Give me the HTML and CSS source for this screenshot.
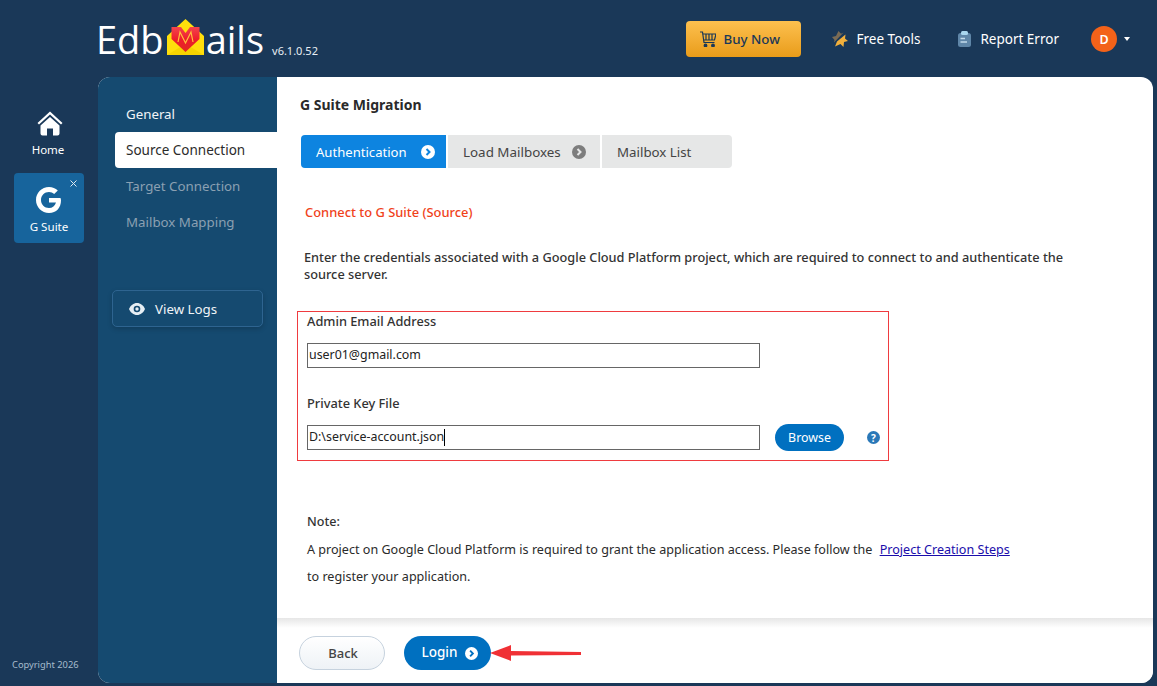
FILE: index.html
```html
<!DOCTYPE html>
<html lang="en">
<head>
<meta charset="utf-8">
<title>EdbMails</title>
<link rel="stylesheet" href="styles.css">
</head>
<body>
<div class="app">
  <header class="topbar">
    <div class="logo">
      <span class="logo-word">Edb</span>
      <svg class="logo-mark" width="37" height="36" viewBox="0 0 37 36">
        <defs>
          <linearGradient id="redfill" x1="0" y1="0" x2="0" y2="1">
            <stop offset="0" stop-color="#f4444c"/>
            <stop offset="0.5" stop-color="#ee1c2c"/>
            <stop offset="1" stop-color="#e02a20"/>
          </linearGradient>
        </defs>
        <path d="M0 17 L18.500 0 L37 17 V36 H0 Z" fill="#ffdf0c"/>
        <path d="M0 36 L18.500 25 L37 36 Z" fill="#f6d400"/>
        <path d="M4.500 8 H14 L18.500 14 L23 8 H32.500 V20 L18.500 33 L4.500 20 Z" fill="url(#redfill)"/>
        <path d="M11 23 L13 13 L18.500 24 L24 13 L26 23" fill="none" stroke="#ffc23a" stroke-width="1.200"/>
      </svg>
      <span class="logo-word">ails</span>
      <span class="version">v6.1.0.52</span>
    </div>
    <nav class="top-actions">
      <button class="buy">
        <svg width="16" height="16" viewBox="0 0 16 16" fill="none" stroke="#1a3858" stroke-width="1.200">
          <path d="M0 1 H2.500 L4 11.500 H14.500"/>
          <path d="M2.800 3 H16 L14.500 9 H3.600"/>
          <path d="M6 3 V9 M9 3 V9 M12 3 V9"/>
          <circle cx="5.500" cy="14.500" r="1.300" fill="#1a3858"/>
          <circle cx="13" cy="14.500" r="1.300" fill="#1a3858"/>
        </svg>
        Buy Now
      </button>
      <a class="top-link free-tools">
        <svg width="16" height="16" viewBox="0 0 16 16">
          <path d="M6.500 0 L9 2.800 L11.500 1.500 L2 11.500 L2.500 9 L0 6 L4 5 Z" fill="#7a6b55"/>
          <path d="M13.500 3.500 L13 7.500 L16 10 L12 11 L11.500 16 L8.500 13 L3 15.500 L5 10.500 Z" fill="#f2b03c"/>
        </svg>
        Free Tools
      </a>
      <a class="top-link report">
        <svg width="13" height="16" viewBox="0 0 13 16">
          <rect x="0" y="2" width="13" height="14" rx="2.500" fill="#5f86a8"/>
          <rect x="3" y="0" width="7" height="4" rx="1.500" fill="#a9d6ee"/>
          <path d="M2.500 7.500 H7 M2.500 11 H9" stroke="#c4dcec" stroke-width="1.300"/>
        </svg>
        Report Error
      </a>
      <div class="avatar">D</div>
      <span class="caret"></span>
    </nav>
  </header>

  <div class="body-row">
    <aside class="rail">
      <a class="rail-home">
        <svg width="26" height="25" viewBox="0 0 26 25" fill="#fff">
          <path d="M13 0.500 L25.500 12 L24 13.500 L13 3.500 L2 13.500 L0.500 12 Z"/>
          <path d="M13 6 L22.500 14.500 V22.500 Q22.500 24.500 20.500 24.500 H16 V17.500 H10 V24.500 H5.500 Q3.500 24.500 3.500 22.500 V14.500 Z"/>
        </svg>
        <span>Home</span>
      </a>
      <div class="rail-tab">
        <svg class="tab-close" width="7" height="7" viewBox="0 0 7 7"><path d="M0.500 0.500 L6.500 6.500 M6.500 0.500 L0.500 6.500" stroke="#dfe9f1" stroke-width="1"/></svg>
        <svg width="26" height="26" viewBox="0 0 26 26">
          <path d="M24.500 11 H13 V15.500 H20 C19 19 16.500 21 13 21 C8.500 21 5 17.500 5 13 C5 8.500 8.500 5 13 5 C15 5 16.800 5.700 18.200 7 L21.800 3.500 C19.500 1.400 16.400 0 13 0 C5.800 0 0 5.800 0 13 C0 20.200 5.800 26 13 26 C20.500 26 25 20.700 25 13.500 C25 12.600 24.800 11.800 24.500 11 Z" fill="#fff"/>
        </svg>
        <span>G Suite</span>
      </div>
      <small class="copyright">Copyright 2026</small>
    </aside>

    <div class="panel">
      <aside class="subnav">
        <ul class="steps">
          <li>General</li>
          <li class="current">Source Connection</li>
          <li class="muted">Target Connection</li>
          <li class="muted">Mailbox Mapping</li>
        </ul>
        <button class="logs">
          <svg width="16" height="12" viewBox="0 0 16 12">
            <path d="M8 0 C4.500 0 1.500 2.400 0 6 C1.500 9.600 4.500 12 8 12 C11.500 12 14.500 9.600 16 6 C14.500 2.400 11.500 0 8 0 Z" fill="#e6eef4"/>
            <circle cx="8" cy="6" r="3.300" fill="#154a70"/>
            <circle cx="8" cy="6" r="1.700" fill="#e6eef4"/>
          </svg>
          View Logs
        </button>
      </aside>

      <main class="content">
        <div class="scroll">
          <h1>G Suite Migration</h1>
          <div class="wizard">
            <div class="wiz active">Authentication
              <svg class="chev" width="14" height="14" viewBox="0 0 14 14"><circle cx="7" cy="7" r="7" fill="#fff"/><path d="M5.500 4 L8.500 7 L5.500 10" fill="none" stroke="#0d84e0" stroke-width="2"/></svg>
            </div>
            <div class="wiz middle">Load Mailboxes
              <svg class="chev" width="14" height="14" viewBox="0 0 14 14"><circle cx="7" cy="7" r="7" fill="#7d7d7d"/><path d="M5.500 4 L8.500 7 L5.500 10" fill="none" stroke="#e6e7e7" stroke-width="2"/></svg>
            </div>
            <div class="wiz last">Mailbox List</div>
          </div>
          <h2>Connect to G Suite (Source)</h2>
          <p class="intro">Enter the credentials associated with a Google Cloud Platform project, which are required to connect to and authenticate the source server.</p>

          <form class="creds">
            <label class="field-label">Admin Email Address</label>
            <div class="input-row">
              <div class="input">user01@gmail.com</div>
            </div>
            <label class="field-label second">Private Key File</label>
            <div class="input-row second-row">
              <div class="input">D:\service-account.json<span class="cursor"></span></div>
              <button type="button" class="browse">Browse</button>
              <span class="help">?</span>
            </div>
          </form>

          <section class="note">
            <h3>Note:</h3>
            <p>A project on Google Cloud Platform is required to grant the application access. Please follow the <a class="link">Project Creation Steps</a></p>
            <p>to register your application.</p>
          </section>
        </div>
        <footer class="actions">
          <button class="back">Back</button>
          <button class="login"><span class="login-label">Login</span>
            <svg width="13" height="13" viewBox="0 0 14 14"><circle cx="7" cy="7" r="7" fill="#fff"/><path d="M5.500 4 L8.500 7 L5.500 10" fill="none" stroke="#0070c0" stroke-width="2"/></svg>
          </button>
          <svg class="arrow" width="92" height="20" viewBox="0 0 92 20">
            <path d="M0 10 L21 2 V8 L91 9 V12 L21 12.500 V18 Z" fill="#f03035"/>
          </svg>
        </footer>
      </main>
    </div>
  </div>
</div>
</body>
</html>
```
FILE: styles.css
```css
* { box-sizing: border-box; }
html, body { margin: 0; height: 100%; }
body {
  background: #1a3858;
  font-family: "Noto Sans", "Open Sans", sans-serif;
  font-size: 13px;
  color: #2b2b2b;
  overflow: hidden;
}
button { font-family: inherit; cursor: pointer; }
.app { width: 1157px; height: 686px; display: flex; flex-direction: column; }

.topbar {
  height: 77px;
  padding: 0 27px 0 96px;
  display: flex;
  align-items: flex-start;
  justify-content: space-between;
}
.logo { display: flex; align-items: flex-start; padding-top: 19px; color: #fff; }
.logo-word { font-family: "Open Sans", sans-serif; font-size: 38px; line-height: 41px; }
.logo-mark { margin: 0 2px 0 3px; flex: none; }
.version { font-size: 11px; margin: 24px 0 0 8px; color: #e8eef4; }
.top-actions { display: flex; align-items: center; height: 78px; }
.buy {
  width: 115px;
  height: 36px;
  margin-right: 31px;
  border: 0;
  border-radius: 4px;
  background: linear-gradient(#fdc04f, #e99c1a);
  color: #1a3858;
  font-size: 13.300px;
  font-weight: 500;
  display: flex;
  align-items: center;
  padding: 0 0 0 14px;
  gap: 8px;
}
.top-link { color: #fff; font-size: 13.500px; display: flex; align-items: center; gap: 9px; }
.free-tools { margin-right: 38px; }
.report { margin-right: 32px; }
.avatar {
  width: 26px;
  height: 26px;
  border-radius: 50%;
  background: #f36219;
  color: #fff;
  font-size: 12.500px;
  font-weight: 600;
  display: flex;
  align-items: center;
  justify-content: center;
}
.caret {
  margin-left: 7px;
  border: 3px solid transparent;
  border-top: 4px solid #fff;
  border-bottom: 0;
}

.body-row { display: flex; height: 606px; }
.rail { width: 98px; display: flex; flex-direction: column; align-items: flex-start; padding: 34px 0 0 14px; color: #fff; }
.rail-home { width: 68px; display: flex; flex-direction: column; align-items: center; gap: 6px; font-size: 11.500px; }
.rail-home svg { margin-left: 3px; }
.rail-tab {
  position: relative;
  margin-top: 16px;
  width: 70px;
  height: 70px;
  background: #17649c;
  border-radius: 4px;
  display: flex;
  flex-direction: column;
  align-items: center;
  padding-top: 14px;
  gap: 6px;
  font-size: 11.600px;
}
.tab-close { position: absolute; top: 7px; right: 7px; }
.copyright { margin-top: auto; margin-left: -2px; padding-bottom: 12px; font-size: 9.300px; color: #a6bccd; }

.panel { width: 1055px; height: 606px; display: flex; border-radius: 12px; overflow: hidden; background: #fff; }
.subnav { width: 179px; background: #154a70; padding: 19px 0 0 14px; }
.steps { list-style: none; margin: 0; padding: 0 0 0 3px; }
.steps li { height: 36px; padding-left: 11px; line-height: 36px; font-size: 13.300px; color: #f0f4f7; border-radius: 4px 0 0 4px; }
.steps li.current { background: #fff; color: #2b2b2b; font-size: 13.500px; }
.steps li.muted { color: #8ba0b2; }
.logs {
  margin-top: 50px;
  width: 151px;
  height: 37px;
  background: transparent;
  border: 1px solid #2e6490;
  border-radius: 5px;
  box-shadow: 0 2px 5px rgba(0,0,0,.18);
  color: #f0f4f7;
  font-size: 13.300px;
  display: flex;
  align-items: center;
  gap: 10px;
  padding: 0 0 0 16px;
}

.content { flex: 1; display: flex; flex-direction: column; }
.scroll { flex: 1; padding: 18px 0 0 23px; }
h1 { margin: 0; font-size: 14px; line-height: 20px; font-weight: 700; color: #2a2a2a; }
.wizard { display: flex; gap: 2px; margin: 20px 0 0 1px; }
.wiz { height: 33px; display: flex; align-items: center; padding-left: 15px; font-size: 13.300px; background: #e6e7e7; color: #444; }
.wiz.active { width: 145px; background: #0d84e0; color: #fff; border-radius: 4px 0 0 4px; gap: 14px; font-size: 13.100px; }
.wiz.middle { width: 152px; gap: 11px; font-size: 13.400px; }
.wiz.last { width: 130px; border-radius: 0 4px 4px 0; }
h2 { margin: 35px 0 0 5px; font-size: 12.900px; line-height: 18px; font-weight: 500; color: #f0421a; }
.intro { margin: 28px 0 0 4px; width: 770px; font-size: 12.750px; line-height: 17px; font-weight: 500; color: #333; }
.creds {
  margin: 28px 0 0 -3px;
  width: 592px;
  height: 150px;
  border: 1px solid #ef3b3f;
  padding: 0 0 0 9px;
}
.field-label { display: block; font-size: 12.800px; line-height: 18px; font-weight: 500; color: #333; }
.field-label.second { margin-top: 26px; }
.input-row { display: flex; align-items: center; margin-top: 13px; }
.input-row.second-row { margin-top: 12px; }
.input {
  width: 453px;
  height: 25px;
  border: 1px solid #666;
  padding: 0 0 2px 1px;
  font-size: 12.400px;
  color: #222;
  display: flex;
  align-items: center;
}
.cursor { width: 1px; height: 17px; background: #000; margin: 2px 0 0; }
.browse {
  margin-left: 15px;
  width: 69px;
  height: 27px;
  border: 0;
  border-radius: 14px;
  background: #0070c0;
  color: #fff;
  font-size: 12.400px;
}
.help {
  margin-left: 23px;
  width: 13px;
  height: 13px;
  border-radius: 50%;
  background: #2a78b8;
  color: #fff;
  font-size: 10px;
  font-weight: 700;
  display: flex;
  align-items: center;
  justify-content: center;
}
.note { margin: 52px 0 0 7px; font-size: 12.580px; color: #2b2b2b; }
h3 { margin: 0 0 10px; font-size: 12.580px; line-height: 18px; font-weight: 500; color: #333; }
.note p { margin: 9px 0 0; line-height: 18px; }
.link { margin-left: 4px; color: #1a0dab; text-decoration: underline; }
.actions {
  height: 65px;
  flex: none;
  padding: 5px 0 0 22px;
  display: flex;
  align-items: center;
  background: linear-gradient(#e6e6e6, #fff 10px);
}
.back {
  width: 86px;
  height: 34px;
  border: 1px solid #c6d2de;
  border-radius: 17px;
  background: linear-gradient(#fff, #eef2f6);
  color: #444;
  font-size: 13px;
  font-weight: 500;
  padding: 0 0 0 2px;
}
.login {
  margin-left: 19px;
  width: 87px;
  height: 34px;
  border: 0;
  border-radius: 17px;
  background: #0070c0;
  color: #fff;
  font-size: 13.500px;
  font-weight: 500;
  display: flex;
  align-items: center;
  justify-content: center;
  gap: 8px;
  padding: 0 0 0 5px;
}
.login-label { margin-top: -2px; }
.arrow { flex: none; margin-left: -1px; }
```
